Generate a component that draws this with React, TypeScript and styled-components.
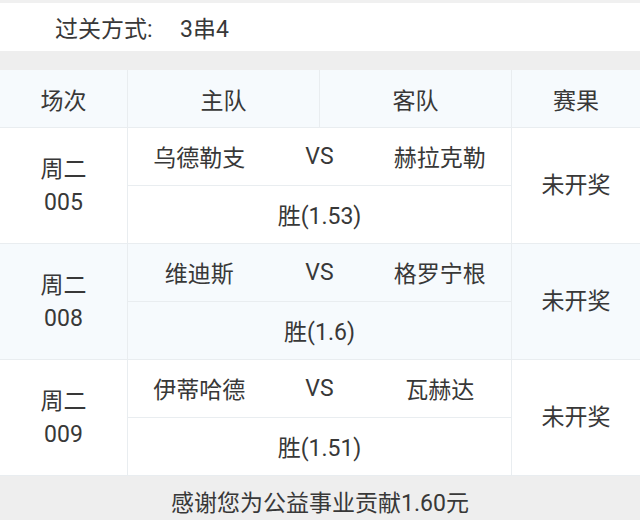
import React from "react";
import styled, { createGlobalStyle } from "styled-components";

const Global = createGlobalStyle`
  html, body { margin: 0; padding: 0; background: #ffffff; }
  body { font-family: Roboto, "Noto Sans CJK SC", sans-serif; color: #383838; }
`;

const Page = styled.div`
  width: 640px;
  height: 520px;
  overflow: hidden;
  display: flex;
  flex-direction: column;
  border-top: 3px solid #f0f0f0;
  box-sizing: border-box;
`;

const ModeBar = styled.div`
  height: 48px;
  display: flex;
  align-items: center;
  padding-left: 55px;
  font-size: 23px;
  background: #ffffff;
`;

const ModeLabel = styled.span`
  width: 125px;
`;

const Gap = styled.div`
  height: 19px;
  background: #eeeeee;
`;

const HeaderRow = styled.div`
  display: grid;
  grid-template-columns: 128px 192px 192px 1fr;
  height: 57px;
  background: #f6fafd;
  border-bottom: 1px solid #e9edf0;
`;

const HeadCell = styled.div<{ $last?: boolean }>`
  display: flex;
  align-items: center;
  justify-content: center;
  font-size: 23px;
  border-right: ${(p) => (p.$last ? "none" : "1px solid #e9edf0")};
`;

const MatchRow = styled.div<{ $tint?: boolean }>`
  display: grid;
  grid-template-columns: 128px 384px 1fr;
  height: 116px;
  background: ${(p) => (p.$tint ? "#f6fafd" : "#ffffff")};
  border-bottom: 1px solid #e9edf0;
  box-sizing: border-box;
`;

const SideCell = styled.div<{ $border?: boolean }>`
  display: flex;
  flex-direction: column;
  align-items: center;
  justify-content: center;
  font-size: 23px;
  line-height: 33px;
  border-right: ${(p) => (p.$border ? "1px solid #e9edf0" : "none")};
`;

const MatchCell = styled.div`
  display: grid;
  grid-template-rows: 1fr 1fr;
  border-right: 1px solid #e9edf0;
`;

const TeamsLine = styled.div`
  display: grid;
  grid-template-columns: 1fr 1fr 1fr;
  align-items: center;
  padding: 0 11px;
  font-size: 23px;
  border-bottom: 1px solid #e9edf0;
  text-align: center;
`;

const PickLine = styled.div`
  display: flex;
  align-items: center;
  justify-content: center;
  font-size: 23px;
`;

const Footer = styled.div`
  flex: 1;
  background: #eeeeee;
  display: flex;
  align-items: center;
  justify-content: center;
  font-size: 23px;
  padding-top: 5px;
`;

const matches = [
  { day: "周二", no: "005", home: "乌德勒支", away: "赫拉克勒", pick: "胜(1.53)" },
  { day: "周二", no: "008", home: "维迪斯", away: "格罗宁根", pick: "胜(1.6)" },
  { day: "周二", no: "009", home: "伊蒂哈德", away: "瓦赫达", pick: "胜(1.51)" },
];

export default function App() {
  return (
    <Page>
      <Global />
      <ModeBar>
        <ModeLabel>过关方式:</ModeLabel>
        <span>3串4</span>
      </ModeBar>
      <Gap />
      <HeaderRow>
        <HeadCell>场次</HeadCell>
        <HeadCell>主队</HeadCell>
        <HeadCell>客队</HeadCell>
        <HeadCell $last>赛果</HeadCell>
      </HeaderRow>
      {matches.map((m, i) => (
        <MatchRow key={m.no} $tint={i === 1}>
          <SideCell $border>
            <span>{m.day}</span>
            <span>{m.no}</span>
          </SideCell>
          <MatchCell>
            <TeamsLine>
              <span>{m.home}</span>
              <span>VS</span>
              <span>{m.away}</span>
            </TeamsLine>
            <PickLine>{m.pick}</PickLine>
          </MatchCell>
          <SideCell>未开奖</SideCell>
        </MatchRow>
      ))}
      <Footer>感谢您为公益事业贡献1.60元</Footer>
    </Page>
  );
}
